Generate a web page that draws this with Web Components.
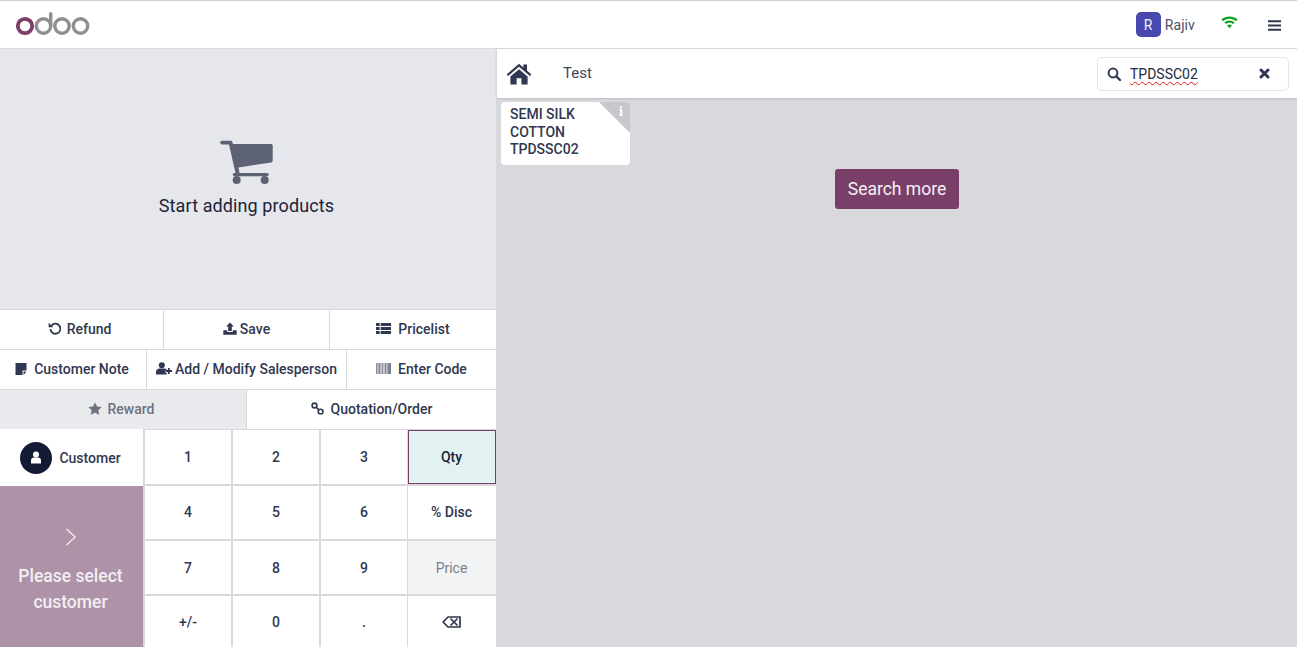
<!DOCTYPE html>
<html lang="en">
<head>
<meta charset="utf-8">
<title>Point of Sale</title>
<style>
  html, body { margin: 0; height: 100%; overflow: hidden; }
  body { font-family: Roboto, "Liberation Sans", sans-serif; color: #2f3850; }
</style>
</head>
<body>
<pos-app></pos-app>

<script>
// Shared svg icons, traced from the reference
const ICONS = {
  home: '<svg width="26" height="22" viewBox="0 0 26 22"><path fill="currentColor" d="M13 0.8 0.6 11.4l1.5 1.7L13 3.8l10.9 9.3 1.5-1.7-4.4-3.8V1.6h-3.6v2.9zM4.4 13.6V21.6h6.2v-6.4h4.8v6.4h6.2v-8L13 6.2z"/></svg>',
  search: '<svg width="14" height="14" viewBox="0 0 14 14"><circle cx="6" cy="6" r="4.4" fill="none" stroke="currentColor" stroke-width="2"/><path d="M9.3 9.3 13 13" stroke="currentColor" stroke-width="2.4" stroke-linecap="round"/></svg>',
  close: '<svg width="11" height="11" viewBox="0 0 11 11"><path d="M2 2l7 7M9 2l-7 7" stroke="currentColor" stroke-width="3" stroke-linecap="round"/></svg>',
  wifi: '<svg width="17" height="13" viewBox="0 0 17 13"><path fill="#0aa51f" d="M8.5 0.4C5.3 0.4 2.5 1.6 0.4 3.6l1.6 1.7c1.7-1.6 4-2.6 6.5-2.6s4.8 1 6.5 2.6l1.6-1.7C14.5 1.6 11.7 0.4 8.5 0.4zM8.5 4.4c-2 0-3.8.8-5.1 2l1.6 1.7c.9-.9 2.1-1.4 3.5-1.4s2.6.5 3.5 1.4l1.6-1.7c-1.3-1.2-3.1-2-5.1-2zM8.5 8.4c-1 0-1.8.4-2.4 1l2.4 2.9 2.4-2.9c-.6-.6-1.4-1-2.4-1z"/></svg>',
  bars: '<svg width="13" height="11" viewBox="0 0 13 11"><path d="M0 1.2h13M0 5.5h13M0 9.8h13" stroke="currentColor" stroke-width="2"/></svg>',
  cart: '<svg width="53" height="45" viewBox="0 0 53 45"><path fill="currentColor" d="M2 .8H10.500c1 0 1.800.6 2 1.600L13 4H51c1 0 1.700.8 1.700 1.700V20.500c0 1-.7 1.800-1.700 2L18.500 27.500 19.500 33H47c1 0 1.800.8 1.800 1.600s-.8 1.600-1.800 1.600H14.500c-1 0-1.800-.8-1.800-1.600s.8-1.600 1.800-1.600h1L9 4.400H2c-1 0-1.800-.8-1.800-1.800S1 .8 2 .8z"/><circle cx="16.700" cy="40" r="4" fill="currentColor"/><circle cx="44.700" cy="40" r="4" fill="currentColor"/></svg>',
  refund: '<svg width="13" height="13" viewBox="0 0 13 13"><path d="M3 4.100A5 5 0 1 1 2 7.500" transform="translate(.4 -.4)" fill="none" stroke="currentColor" stroke-width="1.800"/><path fill="currentColor" d="M.6.800l4.700 4.500H.6z"/></svg>',
  save: '<svg width="14" height="13" viewBox="0 0 14 13"><path fill="currentColor" d="M7 .5 10.900 4.600H8.800V9H5.200V4.600H3.100zM.3 8.300H4.200V10H9.800V8.300H13.700V12.700H.3z"/></svg>',
  list: '<svg width="15" height="11" viewBox="0 0 15 11"><path fill="currentColor" d="M0 0h3.700v3H0zM4.700 0H15v3H4.700zM0 4h3.700v3H0zM4.700 4H15v3H4.700zM0 8h3.700v3H0zM4.700 8H15v3H4.700z"/></svg>',
  note: '<svg width="12" height="12" viewBox="0 0 12 12"><path fill="currentColor" d="M.5 0h11v7.500H7.500V12H.5z"/><path fill="currentColor" d="M8.500 8.600h3L8.500 12z"/></svg>',
  userplus: '<svg width="16" height="13" viewBox="0 0 16 13"><circle cx="5.800" cy="3.300" r="3" fill="currentColor"/><path fill="currentColor" d="M0 12.500V10c0-2.200 1.700-3.600 3.500-3.600h4.600c1.300 0 2.400.7 3 1.700H9.600v3h1.200v1.400z"/><path d="M12.800 6v6M10 9h6" stroke="currentColor" stroke-width="1.800"/></svg>',
  barcode: '<svg width="15" height="11" viewBox="0 0 15 11"><path fill="#8a8e99" d="M0 0h1v11H0z"/><path fill="#b5b7bf" d="M1 0h2v11H1z"/><path fill="#80848f" d="M3 0h1v11H3z"/><path fill="#c0c2c8" d="M4 0h2v11H4z"/><path fill="#90939e" d="M6 0h1.500v11H6z"/><path fill="#c6c8cd" d="M7.500 0H9v11H7.500z"/><path fill="#80848f" d="M9 0h1.500v11H9z"/><path fill="#afb2ba" d="M10.500 0H12v11h-1.500z"/><path fill="#7d818d" d="M12 0h3v11h-3z"/></svg>',
  star: '<svg width="14" height="13" viewBox="0 0 14 13"><path fill="currentColor" d="M7 .2 9 4.500l4.700.6-3.400 3.200.9 4.600L7 10.600l-4.200 2.300.9-4.600L.3 5.100 5 4.500z"/></svg>',
  link: '<svg width="13" height="13" viewBox="0 0 13 13"><g fill="none" stroke="currentColor" stroke-width="1.600"><circle cx="3.500" cy="3.500" r="2.400"/><circle cx="9.600" cy="9.600" r="2.400"/><path d="M5.200 5.200 7.900 7.900"/></g></svg>',
  person: '<svg width="12" height="13" viewBox="0 0 12 13"><circle cx="6" cy="3.500" r="3" fill="currentColor"/><path fill="currentColor" d="M1 12.600V9.400C1 7.800 2.200 6.600 3.800 6.600h4.400C9.800 6.600 11 7.800 11 9.400v3.200z"/></svg>',
  chevron: '<svg width="12" height="18" viewBox="0 0 12 18"><path d="M1.500 1 10.200 9 1.500 17" fill="none" stroke="currentColor" stroke-width="1.300"/></svg>',
  backspace: '<svg width="19" height="12" viewBox="0 0 19 12"><path d="M6 1H18V11H6L1.200 6z" fill="none" stroke="currentColor" stroke-width="1.700"/><path d="M8.500 2.500l7 7M15.500 2.500l-7 7" stroke="currentColor" stroke-width="1.700"/></svg>'
};

class PosLogo extends HTMLElement {
  connectedCallback() {
    this.attachShadow({ mode: 'open' }).innerHTML = `
      <style>:host { display: block; width: 76px; height: 25px; }</style>
      <svg width="76" height="25" viewBox="0 0 76 25">
        <circle cx="10" cy="14" r="7.200" fill="none" stroke="#7c3f6b" stroke-width="3.800"/>
        <g fill="none" stroke="#8f8f8f" stroke-width="3.400">
          <circle cx="28.500" cy="14" r="7.200"/>
          <path d="M35.700 14V1.800" stroke-linecap="round"/>
          <circle cx="47" cy="14" r="7.200"/>
          <circle cx="65.500" cy="14" r="7.200"/>
        </g>
      </svg>`;
  }
}

class PosHeader extends HTMLElement {
  connectedCallback() {
    this.attachShadow({ mode: 'open' }).innerHTML = `
      <style>
        :host {
          display: flex; align-items: center; height: 47px; box-sizing: content-box;
          background: #fff; border-top: 1px solid #cfcfcf; border-bottom: 1px solid #d8d9dd;
          padding-left: 15px;
        }
        .user { margin-left: auto; display: flex; align-items: center; gap: 4px; font-size: 14px; color: #4a5268; letter-spacing: .1px; }
        .avatar {
          width: 25px; height: 25px; border-radius: 5px; background: #4848ae; color: #f1f1fa;
          display: flex; align-items: center; justify-content: center; font-size: 14px;
        }
        .wifi { display: flex; margin-left: 26px; margin-top: -4px; }
        .bars { display: flex; margin-left: 30px; margin-right: 16px; color: #2f3850; margin-top: 2px; }
      </style>
      <pos-logo></pos-logo>
      <div class="user"><span class="avatar">R</span><span>Rajiv</span></div>
      <span class="wifi">${ICONS.wifi}</span>
      <span class="bars">${ICONS.bars}</span>`;
  }
}

class PosBtn extends HTMLElement {
  connectedCallback() {
    const icon = this.getAttribute('icon');
    this.attachShadow({ mode: 'open' }).innerHTML = `
      <style>
        :host {
          display: flex; align-items: center; justify-content: center; box-sizing: border-box;
          padding-bottom: 2px; padding-right: var(--nudge, 0);
          gap: var(--gap, 6px); background: #fff; font-size: 14px; font-weight: 500;
          color: #2f3850; cursor: pointer; min-width: 0; white-space: nowrap;
        }
        :host([muted]) { background: #e9eaee; color: #6d7180; }
        span { display: flex; }
      </style>
      ${icon ? `<span>${ICONS[icon]}</span>` : ''}<slot></slot>`;
  }
}

class PosControls extends HTMLElement {
  connectedCallback() {
    this.attachShadow({ mode: 'open' }).innerHTML = `
      <style>
        :host { display: flex; flex-direction: column; background: #d8d9dd; gap: 1px; padding-top: 1px; }
        .row { display: grid; height: 39px; gap: 1px; }
        .r1 { grid-template-columns: 163px 165px 1fr; }
        .r2 { grid-template-columns: 146px 199px 1fr; }
        .r3 { grid-template-columns: 246px 1fr; }
      </style>
      <div class="row r1">
        <pos-btn icon="refund" style="--nudge:4px">Refund</pos-btn>
        <pos-btn icon="save" style="--gap:3px">Save</pos-btn>
        <pos-btn icon="list" style="--gap:7px">Pricelist</pos-btn>
      </div>
      <div class="row r2">
        <pos-btn icon="note" style="--gap:7px;--nudge:2px">Customer Note</pos-btn>
        <pos-btn icon="userplus" style="--gap:3px">Add / Modify Salesperson</pos-btn>
        <pos-btn icon="barcode" style="--gap:7px">Enter Code</pos-btn>
      </div>
      <div class="row r3">
        <pos-btn icon="star" muted style="--nudge:4px">Reward</pos-btn>
        <pos-btn icon="link" style="--gap:7px">Quotation/Order</pos-btn>
      </div>`;
  }
}

class PosPay extends HTMLElement {
  connectedCallback() {
    this.attachShadow({ mode: 'open' }).innerHTML = `
      <style>
        :host { display: flex; flex-direction: column; width: 143px; flex: none; }
        .customer {
          height: 57px; background: #fff; display: flex; align-items: center; justify-content: center;
          gap: 7px; font-size: 14px; font-weight: 500; color: #2f3850; box-sizing: border-box;
          padding-right: 2px;
        }
        .round {
          width: 32px; height: 32px; border-radius: 50%; background: #131a33; color: #fff;
          display: flex; align-items: center; justify-content: center;
        }
        .go {
          flex: 1; background: #ae92a8; color: #f3eef2; display: flex; flex-direction: column;
          align-items: center; padding: 42px 2px 0 0; font-size: 17.500px; font-weight: 500;
          line-height: 26px; text-align: center;
        }
        .go svg { display: block; margin-bottom: 17px; }
      </style>
      <div class="customer"><span class="round">${ICONS.person}</span>Customer</div>
      <div class="go">${ICONS.chevron}<div>Please select<br>customer</div></div>`;
  }
}

class PosNumpad extends HTMLElement {
  connectedCallback() {
    const keys = ['1','2','3','Qty','4','5','6','% Disc','7','8','9','Price','+/-','0','.','⌫'];
    const cells = keys.map(k => {
      let cls = 'key';
      if (k === 'Qty') cls += ' on';
      if (k === 'Price') cls += ' off';
      const body = k === '⌫' ? ICONS.backspace : k;
      return `<div class="${cls}">${body}</div>`;
    }).join('');
    this.attachShadow({ mode: 'open' }).innerHTML = `
      <style>
        :host {
          display: grid; flex: 1; background: #d8d9dd; gap: 2px; padding-left: 2px; box-sizing: border-box;
          grid-template-columns: 86px 86px 86px 1fr; grid-template-rows: 54px 53px 53px 1fr;
          padding-top: 1px;
        }
        .key {
          background: #fff; display: flex; align-items: center; justify-content: center;
          font-size: 14px; font-weight: 500; color: #2f3850; box-sizing: border-box;
        }
        /* last column overlaps the gutter by a pixel in the original */
        .key:nth-of-type(4n) { margin-left: -1px; padding-right: 1px; }
        /* second row sits a pixel higher in the original */
        .key:nth-of-type(n+5):nth-of-type(-n+8) { padding-bottom: 2px; }
        .on { background: #e2f2f3; box-shadow: inset 0 0 0 1px #7a3f68; color: #1c2238; }
        .off { background: #f2f3f5; color: #7a7e8a; font-weight: 400; }
      </style>
      ${cells}`;
  }
}

class PosOrder extends HTMLElement {
  connectedCallback() {
    this.attachShadow({ mode: 'open' }).innerHTML = `
      <style>
        :host {
          display: flex; flex-direction: column; width: 496px; flex: none; background: #e6e7ec;
          min-height: 0;
        }
        .empty {
          height: 260px; display: flex; flex-direction: column; align-items: center;
          padding: 91px 3px 0 0; box-sizing: border-box; color: #1d2338; font-size: 18px; letter-spacing: .1px;
        }
        .empty svg { display: block; color: #5c6274; margin-bottom: 10px; }
        .pad { flex: 1; display: flex; min-height: 0; background: #d8d9dd; }
      </style>
      <div class="empty">${ICONS.cart}<div>Start adding products</div></div>
      <pos-controls></pos-controls>
      <div class="pad"><pos-pay></pos-pay><pos-numpad></pos-numpad></div>`;
  }
}

class PosSearch extends HTMLElement {
  connectedCallback() {
    this.attachShadow({ mode: 'open' }).innerHTML = `
      <style>
        :host {
          display: flex; align-items: center; width: 192px; height: 34px; box-sizing: border-box;
          background: #fff; border: 1px solid #e4e5e9; border-radius: 5px; padding: 0 18px 0 9px;
          color: #2f3850;
        }
        i { display: flex; }
        .wrap { flex: 1; margin-left: 9px; }
        .val {
          display: inline-block; font-size: 14px; color: #23293f;
          text-decoration: underline wavy #e8161a 1.2px; text-underline-offset: 2px;
        }
      </style>
      <i>${ICONS.search}</i>
      <div class="wrap"><span class="val">TPDSSC02</span></div>
      <i>${ICONS.close}</i>`;
  }
}

class PosProduct extends HTMLElement {
  connectedCallback() {
    this.attachShadow({ mode: 'open' }).innerHTML = `
      <style>
        :host {
          display: block; position: relative; width: 129px; height: 63px; background: #fff; border-radius: 4px;
          overflow: hidden; box-sizing: border-box; padding: 4.400px 9px; font-size: 14px; font-weight: 500;
          line-height: 17.500px; color: #2f3850;
        }
        .tag {
          position: absolute; right: 0; top: 0; width: 31px; height: 31px;
          background: #c6c8ce; clip-path: polygon(0 0, 100% 0, 100% 100%);
        }
        .tag b {
          position: absolute; right: 7px; top: 3px; color: #fff; font: 700 14px/14px "Liberation Serif", serif;
        }
      </style>
      <slot></slot>
      <div class="tag"><b>i</b></div>`;
  }
}

class PosCatalog extends HTMLElement {
  connectedCallback() {
    this.attachShadow({ mode: 'open' }).innerHTML = `
      <style>
        :host { display: flex; flex-direction: column; flex: 1; min-width: 0; background: #d8d9dd; }
        .bar {
          height: 49px; flex: none; background: #fff; display: flex; align-items: center; box-sizing: border-box;
          padding: 0 8px 0 9px; box-shadow: 0 1px 2px rgba(0,0,0,.12); position: relative;
          border-left: 1px solid #d8d9dd;
        }
        .home { display: flex; color: #2f3850; }
        .crumb { margin-left: 31px; font-size: 15px; color: #3e465c; margin-top: -1px; }
        pos-search { margin-left: auto; }
        .grid { padding: 4px 5px; flex: none; }
        .more { display: flex; justify-content: center; margin-left: 1px; }
        .more button {
          background: #7a3f68; color: #f6f0f4; border: 0; border-radius: 3px; width: 124px; height: 40px;
          font: 400 17.500px Roboto, "Liberation Sans", sans-serif; padding: 0;
        }
      </style>
      <div class="bar">
        <span class="home">${ICONS.home}</span>
        <span class="crumb">Test</span>
        <pos-search></pos-search>
      </div>
      <div class="grid"><pos-product>SEMI SILK<br>COTTON<br>TPDSSC02</pos-product></div>
      <div class="more"><button type="button">Search more</button></div>`;
  }
}

class PosApp extends HTMLElement {
  connectedCallback() {
    this.attachShadow({ mode: 'open' }).innerHTML = `
      <style>
        :host { display: flex; flex-direction: column; height: 647px; width: 1297px; overflow: hidden; font-family: Roboto, "Liberation Sans", sans-serif; }
        .main { flex: 1; display: flex; min-height: 0; background: #fff; }
      </style>
      <pos-header></pos-header>
      <div class="main"><pos-order></pos-order><pos-catalog></pos-catalog></div>`;
  }
}

customElements.define('pos-logo', PosLogo);
customElements.define('pos-header', PosHeader);
customElements.define('pos-btn', PosBtn);
customElements.define('pos-controls', PosControls);
customElements.define('pos-pay', PosPay);
customElements.define('pos-numpad', PosNumpad);
customElements.define('pos-order', PosOrder);
customElements.define('pos-search', PosSearch);
customElements.define('pos-product', PosProduct);
customElements.define('pos-catalog', PosCatalog);
customElements.define('pos-app', PosApp);
</script>
</body>
</html>
